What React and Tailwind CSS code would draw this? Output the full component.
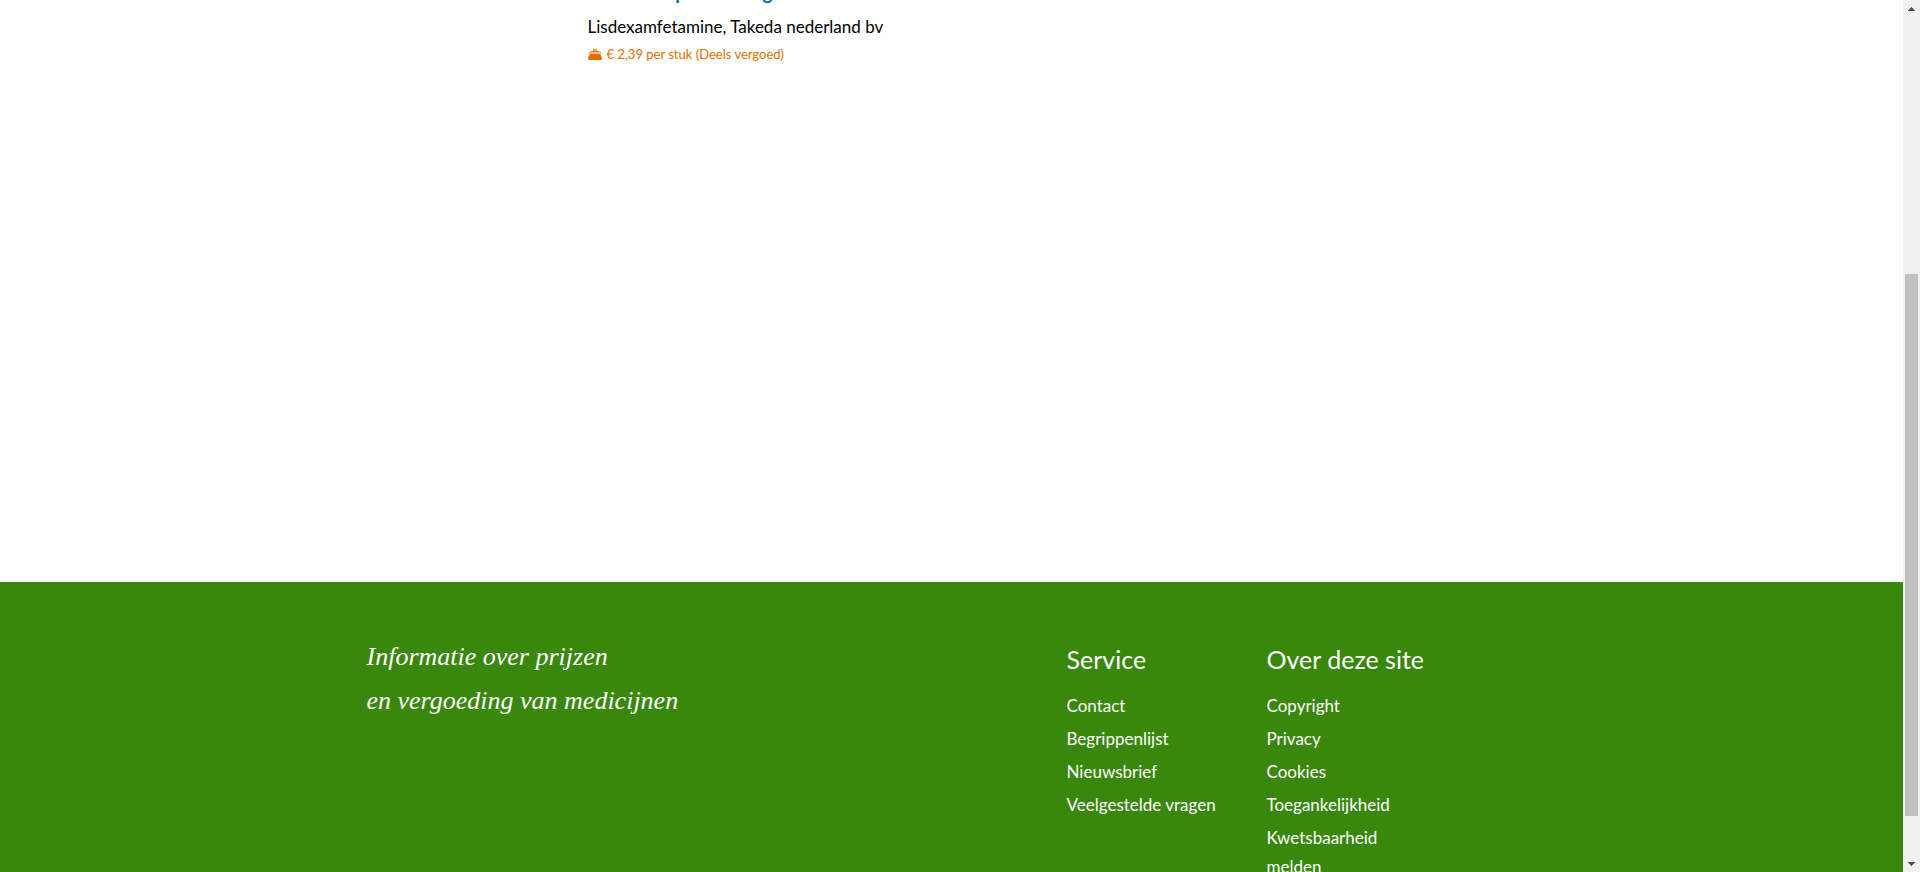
import React from "react";

const services = ["Contact", "Begrippenlijst", "Nieuwsbrief", "Veelgestelde vragen"];
const about = ["Copyright", "Privacy", "Cookies", "Toegankelijkheid", "Kwetsbaarheid melden"];

function PurseIcon() {
  return (
    <svg viewBox="0 0 14 11" className="h-[11px] w-[14px] shrink-0" aria-hidden="true">
      <path d="M5 0h1.500l.5.700.5-.700H9v1.800H5z" fill="#e17000" fillOpacity="0.75" />
      <path d="M2.500 2h9v2.500h-9z" fill="#e17000" fillOpacity="0.45" />
      <path d="M3 2h8v1H3zM.8 3.200h1.600v1.300H.8zM11.600 3.200h1.600v1.300h-1.600z" fill="#e17000" />
      <path d="M2 4.700h10L14 8.500V10l-.8 1H.8L0 10V8.500z" fill="#e17000" />
    </svg>
  );
}

function LinkColumn({ title, items, className }) {
  return (
    <nav aria-label={title} className={className}>
      <h2 className="whitespace-nowrap text-[25px] leading-[30px]">{title}</h2>
      <ul className="mt-[17px] flex flex-col gap-1 text-[17px] leading-[29px]">
        {items.map((item) => (
          <li key={item}>
            <a href="#" className="hover:underline">{item}</a>
          </li>
        ))}
      </ul>
    </nav>
  );
}

function Scrollbar() {
  return (
    <div className="flex w-[17px] shrink-0 flex-col items-center bg-[#f1f1f1]" aria-hidden="true">
      <div className="flex h-[17px] items-center">
        <svg viewBox="0 0 7 4" className="h-1 w-[7px]" shapeRendering="crispEdges">
          <path d="M3 0h1v1h1v1h1v1h1v1H0V3h1V2h1V1h1z" fill="#505050" />
        </svg>
      </div>
      <div className="flex w-full grow flex-col items-center">
        <div className="grow-[257]" />
        <div className="w-[13px] grow-[542] bg-[#c1c1c1]" />
        <div className="grow-[39]" />
      </div>
      <div className="flex h-[17px] items-center">
        <svg viewBox="0 0 7 4" className="h-1 w-[7px]" shapeRendering="crispEdges">
          <path d="M0 0h7v1H6v1H5v1H4v1H3V3H2V2H1V1H0z" fill="#505050" />
        </svg>
      </div>
    </div>
  );
}

export default function App() {
  return (
    <div className="flex h-screen overflow-hidden bg-white font-['Lato','Noto_Sans',sans-serif]">
      <div className="flex min-w-0 grow flex-col overflow-hidden">
        <main className="mx-auto w-full max-w-[1170px] grow pl-[221px]">
          <article>
            <h2 className="-mt-[21px] text-[19px] font-bold leading-7 text-[#01689b]">
              <a href="#">Elvanse capsule 30mg</a>
            </h2>
            <p className="mt-[5px] text-[17px] leading-[29px] text-black">Lisdexamfetamine, Takeda nederland bv</p>
            <p className="mt-[3px] flex items-center gap-[5px] text-[13px] leading-5 text-[#e17000]">
              <PurseIcon />
              € 2,39 per stuk (Deels vergoed)
            </p>
          </article>
        </main>
        <footer className="h-[290px] shrink-0 bg-[#39870c] text-white">
          <div className="mx-auto flex w-full max-w-[1170px] pt-[62px]">
            <p className="w-[700px] -mt-[9px] font-['Liberation_Serif',serif] text-[26px] italic leading-[44px]">
              Informatie over prijzen
              <br />
              en vergoeding van medicijnen
            </p>
            <LinkColumn title="Service" items={services} className="w-[200px]" />
            <LinkColumn title="Over deze site" items={about} className="w-[160px]" />
          </div>
        </footer>
      </div>
      <Scrollbar />
    </div>
  );
}
